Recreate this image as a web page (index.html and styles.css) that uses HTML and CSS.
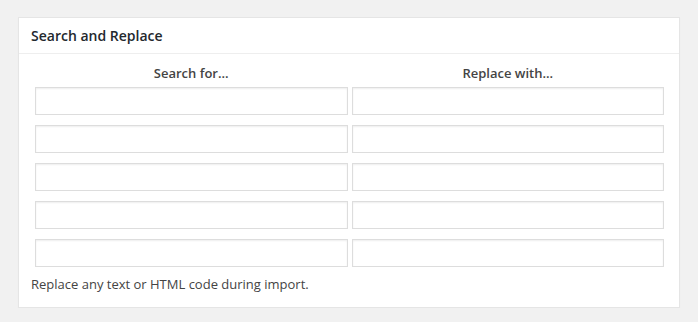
FILE: index.html
```html
<!DOCTYPE html>
<html lang="en">
<head>
  <meta charset="UTF-8" />
  <title>Search and Replace</title>
  <link rel="stylesheet" href="styles.css">
</head>
<body>

  <div class="postbox">
    <h2 class="hndle">Search and Replace</h2>
    <div class="inside">
      <div class="replace-grid">
        <div class="col-head">Search for...</div>
        <div class="col-head">Replace with...</div>

        <input type="text" class="regular-text" />
        <input type="text" class="regular-text" />
        <input type="text" class="regular-text" />
        <input type="text" class="regular-text" />
        <input type="text" class="regular-text" />
        <input type="text" class="regular-text" />
        <input type="text" class="regular-text" />
        <input type="text" class="regular-text" />
        <input type="text" class="regular-text" />
        <input type="text" class="regular-text" />
      </div>
      <p class="description">Replace any text or HTML code during import.</p>
    </div>
  </div>

</body>
</html>
```

FILE: styles.css
```css
/* Base */
* {
  box-sizing: border-box;
}

html, body {
  margin: 0;
  background: #f1f1f1;
  color: #444;
  font-family: 'Open Sans', sans-serif;
  font-size: 13px;
  line-height: 20px;
}

body {
  padding: 17px 18px 0 18px;
}

/* Caja */
.postbox {
  width: 662px;
  background: #fff;
  border: 1px solid #e5e5e5;
  box-shadow: 0 1px 1px rgba(0, 0, 0, 0.04);
}

.hndle {
  margin: 0;
  padding: 8px 12px 8px;
  font-size: 14px;
  font-weight: 600;
  line-height: 19px;
  color: #23282d;
  border-bottom: 1px solid #eee;
}

.inside {
  padding: 9px 15px 13px 16px;
}

/* Rejilla de campos */
.replace-grid {
  display: grid;
  grid-template-columns: 1fr 1fr;
  column-gap: 4px;
  row-gap: 10px;
}

.col-head {
  text-align: center;
  font-weight: 600;
  color: #444;
  margin-bottom: -6px;
}

.regular-text {
  height: 28px;
  width: 100%;
  margin: 0;
  padding: 3px 5px;
  border: 1px solid #ddd;
  background: #fff;
  box-shadow: inset 0 1px 2px rgba(0, 0, 0, 0.07);
  font-family: 'Open Sans', sans-serif;
  font-size: 14px;
  outline: none;
}

.description {
  margin: 7px 0 0 -4px;
  color: #444;
}
```
